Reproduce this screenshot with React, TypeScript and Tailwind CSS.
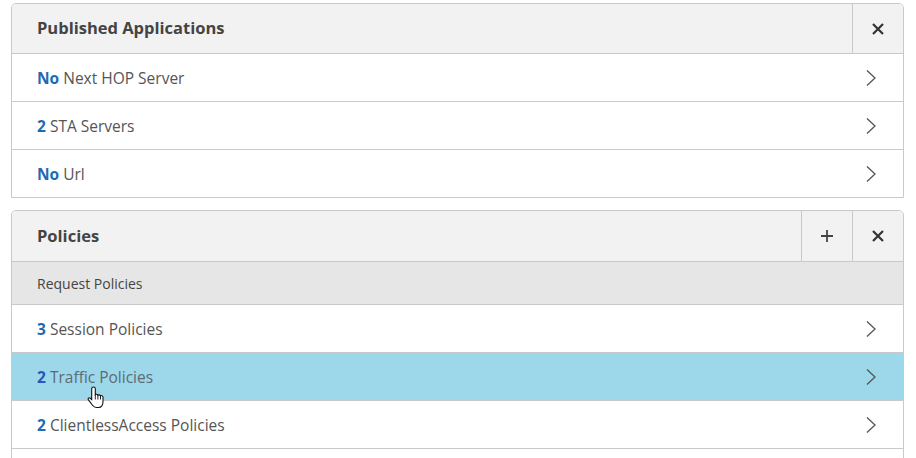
import React from 'react';

const Chevron = () => (
  <svg width="12" height="18" viewBox="0 0 12 18" fill="none">
    <path d="M2 1.5 L10 9 L2 16.5" stroke="#555" strokeWidth="1.3" />
  </svg>
);

const CloseIcon = () => (
  <svg width="14" height="14" viewBox="0 0 14 14" fill="none">
    <path d="M2 2 L12 12 M12 2 L2 12" stroke="#333" strokeWidth="2.2" />
  </svg>
);

const PlusIcon = () => (
  <svg width="14" height="14" viewBox="0 0 14 14" fill="none">
    <path d="M7 1 V13 M1 7 H13" stroke="#444" strokeWidth="1.8" />
  </svg>
);

// pointer hand hovering the active row, sits above the next row
const HandCursor = () => (
  <div className="absolute left-[75px] top-[33px] z-10 h-[23px] w-[18px]">
    <svg width="18" height="23" viewBox="0 0 18 23" className="h-[23px] w-[18px]">
      <path
        d="M6.5 1 C7.6 1 8.3 1.8 8.3 2.8 V8.6 C8.8 8 10.7 8 10.9 9.3 C11.5 8.6 13.2 8.7 13.5 9.9 C14.1 9.3 15.9 9.5 16 11 V15.5 C16 19 14.4 21.5 11.5 21.5 H9.5 C7.6 21.5 6.5 20.7 5.5 19.3 L1.3 13.6 C0.7 12.6 1.8 11.3 3 12 L4.7 13.6 V2.8 C4.7 1.8 5.4 1 6.5 1 Z"
        fill="#fff"
        stroke="#111"
        strokeWidth="1.1"
      />
      <path d="M8.3 8.6 V13.5 M10.9 9.3 V13.5 M13.5 9.9 V13.5" stroke="#111" strokeWidth="0.9" />
    </svg>
  </div>
);

type Row = { count: string; label: string; active?: boolean };

const ListRow = ({ row, cursor }: { row: Row; cursor?: boolean }) => (
  <div
    className={`relative flex h-[48px] items-center justify-between border-t border-[#c9c9c9] pl-[25px] pr-[26px] text-[15.5px] ${
      row.active ? 'bg-[#9dd8ea]' : 'bg-white'
    }`}
  >
    <span className="pt-[3px]">
      <span className={`font-bold ${row.active ? 'text-[#2a56b8]' : 'text-[#1d6bb3]'}`}>{row.count}</span>{' '}
      <span className={row.active ? 'text-[#5c6b73]' : 'text-[#555]'}>{row.label}</span>
    </span>
    <Chevron />
    {cursor && <HandCursor />}
  </div>
);

const HeaderButton = ({ children }: { children: React.ReactNode }) => (
  <button className="flex h-full w-[51px] items-center justify-center border-l border-[#c9c9c9]">
    {children}
  </button>
);

export default function App() {
  const published: Row[] = [
    { count: 'No', label: 'Next HOP Server' },
    { count: '2', label: 'STA Servers' },
    { count: 'No', label: 'Url' },
  ];
  const policies: Row[] = [
    { count: '3', label: 'Session Policies' },
    { count: '2', label: 'Traffic Policies', active: true },
    { count: '2', label: 'ClientlessAccess Policies' },
  ];

  return (
    <div
      className="h-[458px] w-[916px] overflow-hidden bg-white pl-[11px] pr-[12px] pt-[3px]"
      style={{ fontFamily: '"Open Sans", "Noto Sans", sans-serif' }}
    >
      <div className="overflow-hidden rounded-t-[5px] border border-[#c9c9c9]">
        <div className="flex h-[49px] items-center justify-between bg-[#f2f2f2]">
          <span className="pl-[25px] text-[16.5px] font-bold text-[#444]">Published Applications</span>
          <HeaderButton>
            <CloseIcon />
          </HeaderButton>
        </div>
        {published.map((r) => (
          <ListRow key={r.label} row={r} />
        ))}
      </div>

      <div className="mt-[12px] overflow-hidden rounded-t-[5px] border border-[#c9c9c9]">
        <div className="flex h-[50px] items-center justify-between bg-[#f2f2f2]">
          <span className="pl-[25px] text-[16.5px] font-bold text-[#444]">Policies</span>
          <div className="flex h-full">
            <HeaderButton>
              <PlusIcon />
            </HeaderButton>
            <HeaderButton>
              <CloseIcon />
            </HeaderButton>
          </div>
        </div>
        <div className="flex h-[43px] items-center border-t border-[#c9c9c9] bg-[#e6e6e6] pl-[25px] text-[14px] text-[#444]">
          Request Policies
        </div>
        {policies.map((r) => (
          <ListRow key={r.label} row={r} cursor={r.active} />
        ))}
        <div className="h-[20px] border-t border-[#c9c9c9] bg-white" />
      </div>
    </div>
  );
}
